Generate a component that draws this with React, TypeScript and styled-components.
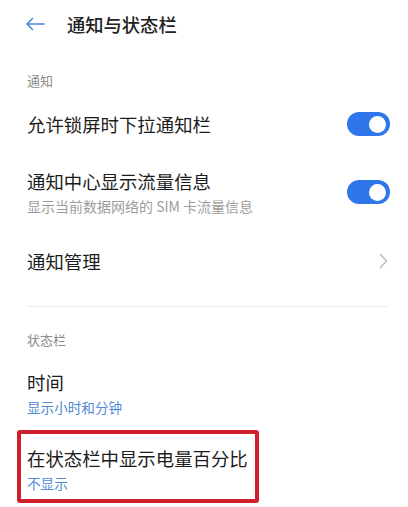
import styled, { createGlobalStyle } from 'styled-components';

const GlobalStyle = createGlobalStyle`
    html, body {
        margin: 0;
        padding: 0;
        background: #ffffff;
    }
    body {
        font-family: "Noto Sans CJK SC", "Noto Sans", sans-serif;
        color: #1c1c1c;
    }
`

const BackArrow = () => (
    <svg width="20" height="14" viewBox="0 0 20 14" fill="none">
        <path d="M19 7H2M7.5 1.5L2 7l5.5 5.5" stroke="#4a86d8" strokeWidth="1.5" strokeLinecap="round" strokeLinejoin="round" />
    </svg>
)

const Chevron = () => (
    <svg width="9" height="16" viewBox="0 0 9 16" fill="none">
        <path d="M1.5 1.5L7.5 8l-6 6.5" stroke="#b8b8b8" strokeWidth="1.3" strokeLinecap="round" strokeLinejoin="round" />
    </svg>
)

type SettingProps = {
    title: string;
    sub?: string;
    subTone?: 'grey' | 'blue';
};

const SettingText = ({ title, sub, subTone = 'grey' }: SettingProps) => (
    <TextBlock>
        <ItemTitle>{title}</ItemTitle>
        {sub && <ItemSub $tone={subTone}>{sub}</ItemSub>}
    </TextBlock>
)

const App = () => {
    return (
        <>
            <GlobalStyle />
            <Page>
                <Header>
                    <BackButton><BackArrow /></BackButton>
                    <HeaderTitle>通知与状态栏</HeaderTitle>
                </Header>

                <SectionLabel $top={24}>通知</SectionLabel>
                <Row $height={68}>
                    <SettingText title="允许锁屏时下拉通知栏" />
                    <Toggle><Knob /></Toggle>
                </Row>
                <Row $height={68}>
                    <SettingText title="通知中心显示流量信息" sub="显示当前数据网络的 SIM 卡流量信息" />
                    <Toggle><Knob /></Toggle>
                </Row>
                <Row $height={70}>
                    <SettingText title="通知管理" />
                    <Chevron />
                </Row>

                <Divider />

                <SectionLabel $top={24}>状态栏</SectionLabel>
                <PlainItem>
                    <SettingText title="时间" sub="显示小时和分钟" subTone="blue" />
                </PlainItem>
                <Highlight>
                    <SettingText title="在状态栏中显示电量百分比" sub="不显示" subTone="blue" />
                </Highlight>
            </Page>
        </>
    )
}

export default App

const Page = styled.div`
    width: 408px;
    height: 507px;
    overflow: hidden;
    display: flex;
    flex-direction: column;
`

const Header = styled.div`
    height: 48px;
    display: flex;
    align-items: center;
    padding-left: 25px;
`

const BackButton = styled.div`
    width: 20px;
    height: 14px;
    display: flex;
    margin-right: 22px;
`

const HeaderTitle = styled.h1`
    margin: 0;
    font-size: 18.3px;
    font-weight: 500;
    line-height: 24px;
    color: #222222;
`

const SectionLabel = styled.div<{ $top: number }>`
    margin-top: ${p => p.$top}px;
    padding-left: 27px;
    font-size: 13px;
    line-height: 18px;
    color: #8c8c8c;
`

const Row = styled.div<{ $height: number }>`
    height: ${p => p.$height}px;
    display: flex;
    align-items: center;
    justify-content: space-between;
    padding: 0 20px 0 27px;
`

const TextBlock = styled.div`
    display: flex;
    flex-direction: column;
    gap: 4px;
`

const ItemTitle = styled.div`
    font-size: 18.4px;
    line-height: 24px;
    color: #1c1c1c;
    white-space: nowrap;
`

const ItemSub = styled.div<{ $tone: 'grey' | 'blue' }>`
    font-size: ${p => (p.$tone === 'blue' ? '13.6px' : '14px')};
    line-height: 18px;
    color: ${p => (p.$tone === 'blue' ? '#5189d6' : '#9c9c9c')};
    white-space: nowrap;
`

const Toggle = styled.div`
    width: 43px;
    height: 24px;
    border-radius: 12px;
    background: #2e76ea;
    display: flex;
    align-items: center;
    justify-content: flex-end;
    padding-right: 4px;
    box-sizing: border-box;
    margin-right: -2px;
`

const Knob = styled.div`
    width: 17px;
    height: 17px;
    border-radius: 50%;
    background: #ffffff;
`

const Divider = styled.div`
    height: 1px;
    background: #ececec;
    margin: 10px 20px 0 27px;
`

const PlainItem = styled.div`
    padding: 21px 0 14px 27px;
`

const Highlight = styled.div`
    align-self: flex-start;
    margin-left: 17px;
    padding: 12px 7px 7px 6px;
    border: 4px solid #d0202c;
    border-radius: 3px;
`
